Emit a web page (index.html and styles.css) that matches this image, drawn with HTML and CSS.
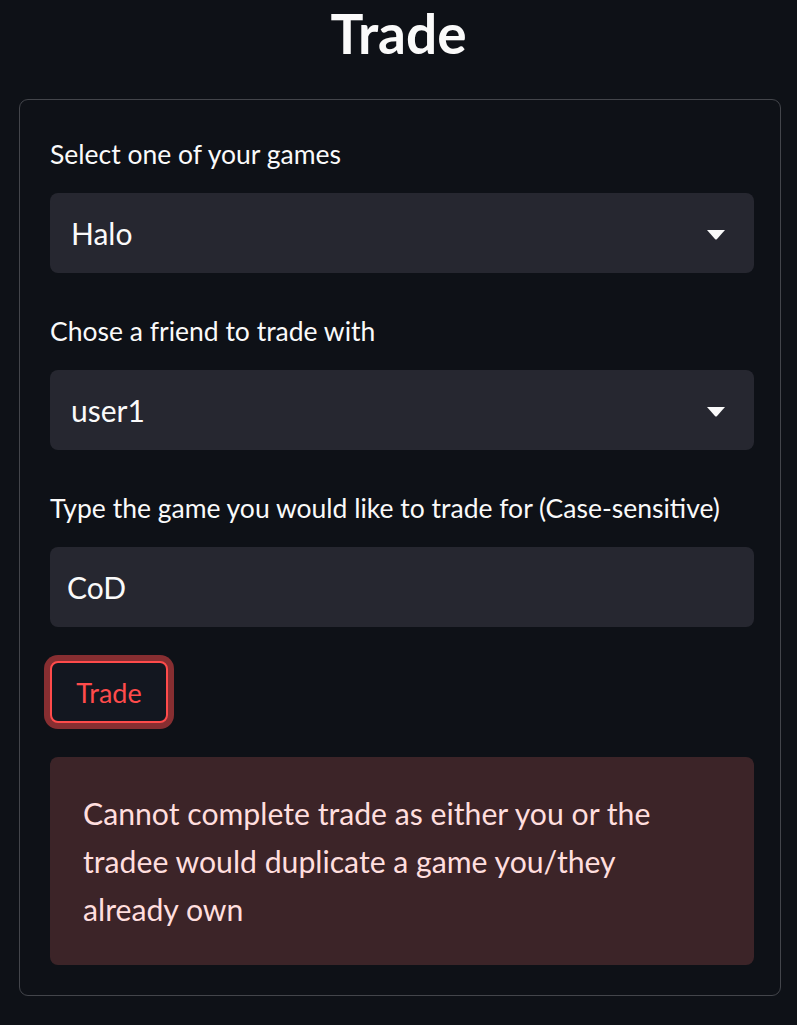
FILE: index.html
```html
<!DOCTYPE html>
<html lang="en">
<head>
<meta charset="utf-8">
<title>Trade</title>
<link rel="stylesheet" href="styles.css">
</head>
<body>
<h1 class="title">Trade</h1>
<div class="form">
  <div class="field">
    <div class="label">Select one of your games</div>
    <div class="select">
      <span class="value">Halo</span>
      <svg class="caret" width="18" height="10" viewBox="0 0 18 10"><path d="M0 0 H18 L9.8 9.2 Q9 10 8.2 9.2 Z" fill="#fafafa"/></svg>
    </div>
  </div>
  <div class="field">
    <div class="label">Chose a friend to trade with</div>
    <div class="select">
      <span class="value">user1</span>
      <svg class="caret" width="18" height="10" viewBox="0 0 18 10"><path d="M0 0 H18 L9.8 9.2 Q9 10 8.2 9.2 Z" fill="#fafafa"/></svg>
    </div>
  </div>
  <div class="field">
    <div class="label">Type the game you would like to trade for (Case-sensitive)</div>
    <div class="input">CoD</div>
  </div>
  <div class="btn-row"><button class="btn">Trade</button></div>
  <div class="alert">Cannot complete trade as either you or the<br>tradee would duplicate a game you/they<br>already own</div>
</div>
</body>
</html>
```
FILE: styles.css
```css
html, body {
  margin: 0;
  padding: 0;
  background: #0e1117;
  color: #fafafa;
  font-family: "Lato", "Noto Sans", sans-serif;
}
.title {
  margin: 0 0 33px 0;
  height: 66px;
  line-height: 66px;
  font-size: 55px;
  font-weight: 700;
  text-align: center;
  color: #fafafa;
}
.form {
  box-sizing: border-box;
  width: 762px;
  margin-left: 19px;
  border: 1px solid #43454b;
  border-radius: 9px;
  padding: 36px 26px 30px 30px;
  display: flex;
  flex-direction: column;
}
.field {
  display: flex;
  flex-direction: column;
}
.field + .field {
  margin-top: 40px;
}
.label {
  height: 36px;
  line-height: 36px;
  font-size: 26.5px;
  margin-bottom: 21px;
  color: #fafafa;
}
.select, .input {
  box-sizing: border-box;
  height: 80px;
  background: #262730;
  border-radius: 8px;
  display: flex;
  align-items: center;
  font-size: 30px;
  color: #fafafa;
}
.select {
  justify-content: space-between;
  padding: 0 29px 0 21px;
}
.caret {
  display: block;
  margin-top: 3px;
}
.input {
  padding: 0 17px;
}
.btn-row {
  margin-top: 34px;
  display: flex;
}
.btn {
  box-sizing: border-box;
  height: 62px;
  width: 118px;
  background: #131720;
  border: 2px solid #ff4b4b;
  border-radius: 8px;
  box-shadow: 0 0 0 6px rgba(255, 75, 75, 0.5);
  color: #ff4b4b;
  font-family: "Lato", "Noto Sans", sans-serif;
  font-size: 27px;
  padding: 0;
}
.alert {
  margin-top: 34px;
  box-sizing: border-box;
  height: 208px;
  background: #3c2428;
  border-radius: 8px;
  padding: 32px 33px;
  font-size: 30.2px;
  line-height: 48px;
  color: #ffdede;
}
```
